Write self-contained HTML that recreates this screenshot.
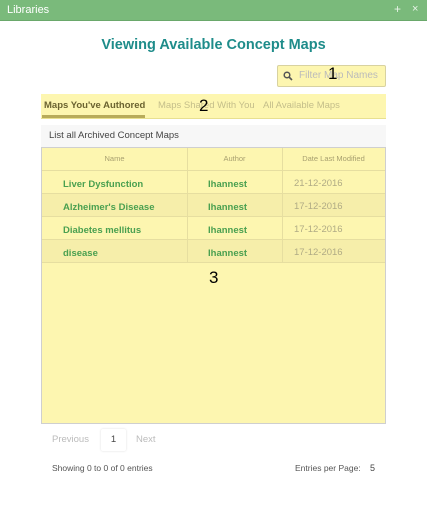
<!DOCTYPE html>
<html><head><style>
*{margin:0;padding:0;box-sizing:border-box}
body{width:427px;height:531px;background:#fff;font-family:"Liberation Sans",sans-serif;position:relative;overflow:hidden}
.a{position:absolute}
</style></head><body>
<div class="a" style="left:0;top:0;width:427px;height:21px;background:#7aba7b;border-bottom:1px solid #6aa86b"></div>
<div class="a" style="left:7px;top:4px;color:#fff;font-size:11px">Libraries</div>
<div class="a" style="left:394px;top:2px;color:#e8f4e8;font-size:12px">+</div>
<div class="a" style="left:412px;top:3px;color:#e8f4e8;font-size:11px">×</div>
<div class="a" style="left:0;top:37px;width:427px;text-align:center;color:#1e8c8a;font-size:14.5px;font-weight:bold">Viewing Available Concept Maps</div>
<div class="a" style="left:277px;top:65px;width:109px;height:22px;background:#fdf6b0;border:1px solid #d8d2a0;border-radius:2px"></div>
<svg class="a" style="left:283px;top:71px" width="10" height="10"><circle cx="4" cy="4" r="2.8" stroke="#555" stroke-width="1.5" fill="none"/><line x1="6" y1="6" x2="9" y2="9" stroke="#555" stroke-width="1.6"/></svg>
<div class="a" style="left:299px;top:70px;color:#bbb;font-size:10px">Filter Map Names</div>
<div class="a" style="left:328px;top:64px;color:#000;font-size:17px">1</div>
<div class="a" style="left:41px;top:94px;width:345px;height:25px;background:#fdf6b0;border-bottom:1px solid #e8e090"></div>
<div class="a" style="left:42px;top:115px;width:103px;height:3px;background:#b8ab5a"></div>
<div class="a" style="left:44px;top:100px;color:#6b6330;font-size:9.5px;font-weight:bold">Maps You've Authored</div>
<div class="a" style="left:158px;top:100px;color:#c4be8a;font-size:9.5px">Maps Shared With You</div>
<div class="a" style="left:263px;top:100px;color:#c4be8a;font-size:9.5px">All Available Maps</div>
<div class="a" style="left:199px;top:96px;color:#000;font-size:17px">2</div>
<div class="a" style="left:41px;top:125px;width:345px;height:22px;background:#f7f7f7"></div>
<div class="a" style="left:49px;top:130px;color:#444;font-size:9.5px">List all Archived Concept Maps</div>
<div class="a" style="left:41px;top:147px;width:345px;height:277px;background:#fdf6b0;border:1px solid #cfcfcf"></div>
<div class="a" style="left:42px;top:193px;width:343px;height:23px;background:#f6eeaa"></div>
<div class="a" style="left:42px;top:239px;width:343px;height:23px;background:#f6eeaa"></div>
<div class="a" style="left:42px;top:170px;width:343px;height:1px;background:#e6dea0"></div>
<div class="a" style="left:42px;top:193px;width:343px;height:1px;background:#e6dea0"></div>
<div class="a" style="left:42px;top:216px;width:343px;height:1px;background:#e6dea0"></div>
<div class="a" style="left:42px;top:239px;width:343px;height:1px;background:#e6dea0"></div>
<div class="a" style="left:42px;top:262px;width:343px;height:1px;background:#e6dea0"></div>
<div class="a" style="left:187px;top:148px;width:1px;height:114px;background:#e6dea0"></div>
<div class="a" style="left:282px;top:148px;width:1px;height:114px;background:#e6dea0"></div>
<div class="a" style="left:42px;top:154px;width:145px;text-align:center;color:#a8a070;font-size:7.5px">Name</div>
<div class="a" style="left:187px;top:154px;width:95px;text-align:center;color:#a8a070;font-size:7.5px">Author</div>
<div class="a" style="left:282px;top:154px;width:103px;text-align:center;color:#a8a070;font-size:7.5px">Date Last Modified</div>
<div class="a" style="left:63px;top:173px;color:#4aa050;font-size:9.5px;font-weight:bold;line-height:23px">Liver Dysfunction<br>Alzheimer's Disease<br>Diabetes mellitus<br>disease</div>
<div class="a" style="left:208px;top:173px;color:#4aa050;font-size:9.5px;font-weight:bold;line-height:23px">Ihannest<br>Ihannest<br>Ihannest<br>Ihannest</div>
<div class="a" style="left:294px;top:172px;color:#b0ab85;font-size:9.5px;line-height:23px">21-12-2016<br>17-12-2016<br>17-12-2016<br>17-12-2016</div>
<div class="a" style="left:209px;top:268px;color:#000;font-size:17px">3</div>
<div class="a" style="left:52px;top:434px;color:#bbb;font-size:9.5px">Previous</div>
<div class="a" style="left:101px;top:429px;width:25px;height:22px;background:#fff;box-shadow:0 0 2px #ddd;border-radius:2px;text-align:center;line-height:22px;color:#444;font-size:9.5px">1</div>
<div class="a" style="left:136px;top:434px;color:#bbb;font-size:9.5px">Next</div>
<div class="a" style="left:52px;top:463px;color:#555;font-size:8.5px">Showing 0 to 0 of 0 entries</div>
<div class="a" style="left:295px;top:463px;color:#555;font-size:8.5px">Entries per Page:</div>
<div class="a" style="left:370px;top:463px;color:#444;font-size:9px">5</div>
</body></html>
